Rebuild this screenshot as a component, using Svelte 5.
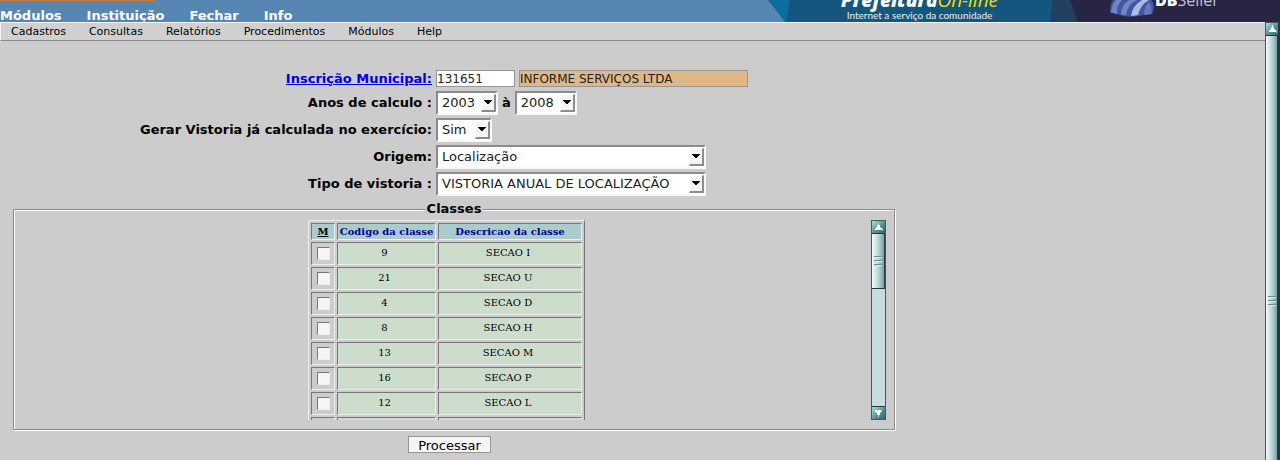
<script>
  const modules = ['Módulos', 'Instituição', 'Fechar', 'Info'];
  const menu = ['Cadastros', 'Consultas', 'Relatórios', 'Procedimentos', 'Módulos', 'Help'];
  const years = ['2003', '2004', '2005', '2006', '2007', '2008'];

  let inscription = $state('131651');
  let company = $state('INFORME SERVIÇOS LTDA');
  let from = $state('2003');
  let to = $state('2008');

  let classes = $state([
    { code: 9, name: 'SECAO I', on: false },
    { code: 21, name: 'SECAO U', on: false },
    { code: 4, name: 'SECAO D', on: false },
    { code: 8, name: 'SECAO H', on: false },
    { code: 13, name: 'SECAO M', on: false },
    { code: 16, name: 'SECAO P', on: false },
    { code: 12, name: 'SECAO L', on: false },
    { code: 3, name: 'SECAO C', on: false }
  ]);

  function toggleAll() {
    const next = !classes.every((c) => c.on);
    classes.forEach((c) => (c.on = next));
  }
</script>

{#snippet chevron()}
  <span class="drop"><svg viewBox="0 0 8 5" width="8" height="5" shape-rendering="crispEdges"><path d="M0 0h8v1H7v1H6v1H5v1H3V3H2V2H1V1H0z" /></svg></span>
{/snippet}

{#snippet arrow(down)}
  <svg class:down viewBox="0 0 13 12" width="13" height="12" aria-hidden="true" shape-rendering="crispEdges">
    <path d="M4 10h7V7h-1v3" fill="#8fc0c2" />
    <path d="M6 2h1v2h1v2h1v1h1v2H3V7h1V6h1V4h1z" fill="#fff" />
  </svg>
{/snippet}

{#snippet grip()}
  <svg viewBox="0 0 8 10" width="8" height="10" aria-hidden="true" shape-rendering="crispEdges">
    <path d="M0 0h8v1H0zM0 4h8v1H0zM0 8h8v1H0z" fill="#5f9192" />
    <path d="M0 1h8v1H0zM0 5h8v1H0zM0 9h8v1H0z" fill="#dcebeb" />
  </svg>
{/snippet}

<div class="page">
  <header>
    <nav class="modules">
      {#each modules as item}<a href="#{item}">{item}</a>{/each}
    </nav>
    <div class="banner">
      <svg class="art" viewBox="0 0 512 22" width="512" height="22" aria-hidden="true">
        <path d="M0 0h512v22H17z" fill="#0c6e9f" />
        <path d="M22 0h490v22H18z" fill="#15567f" />
        <path d="M284 0h228v22H282z" fill="#21405f" />
        <path d="M302 0h210v22H310z" fill="#272543" />
        <path d="M345 0h39q4 8 0 14-4 1-8 1-12 3-20 1-7-2-14-3 0-8 3-13z" fill="#4355a0" />
        <path d="M348 0h6q-6 6-5 14l-6-2q1-8 5-12zM361 0h8q-10 5-11 15h-5q0-10 8-15z" fill="#6e87c4" />
        <path d="M374 0h7q-9 5-11 15l-7 1q1-10 11-16z" fill="#adb9e6" />
        <path d="M381 2q4 6 2 12l-7 1q0-8 5-13z" fill="#6579bf" />
      </svg>
      <div class="brand">
        <div class="name"><b>Prefeitura</b><span>On-line</span></div>
        <div class="tag">Internet a serviço da comunidade</div>
      </div>
      <div class="seller"><b>DB</b>Seller</div>
    </div>
  </header>

  <div class="body">
    <main>
      <nav class="menu">
        {#each menu as item}<a href="#{item}">{item}</a>{/each}
      </nav>

      <form onsubmit={(e) => e.preventDefault()}>
        <div class="fields">
          <label for="insc"><a href="#busca">Inscrição Municipal:</a></label>
          <div class="row first">
            <input id="insc" class="code" bind:value={inscription} />
            <input class="company" aria-label="Nome" readonly bind:value={company} />
          </div>

          <label for="from">Anos de calculo :</label>
          <div class="row">
            <span class="pick"><select id="from" bind:value={from}>{#each years as y}<option>{y}</option>{/each}</select>{@render chevron()}</span>
            <label for="to">à</label>
            <span class="pick"><select id="to" bind:value={to}>{#each years as y}<option>{y}</option>{/each}</select>{@render chevron()}</span>
          </div>

          <label for="redo">Gerar Vistoria já calculada no exercício:</label>
          <div class="row">
            <span class="pick short"><select id="redo"><option>Sim</option><option>Não</option></select>{@render chevron()}</span>
          </div>

          <label for="origin">Origem:</label>
          <div class="row">
            <span class="pick wide"><select id="origin"><option>Localização</option></select>{@render chevron()}</span>
          </div>

          <label for="type">Tipo de vistoria :</label>
          <div class="row">
            <span class="pick wide"><select id="type"><option>VISTORIA ANUAL DE LOCALIZAÇÃO</option></select>{@render chevron()}</span>
          </div>
        </div>

        <fieldset>
          <legend>Classes</legend>
          <div class="list">
            <div class="view">
              <table>
                <thead>
                  <tr>
                    <th><button type="button" class="mark" onclick={toggleAll}>M</button></th>
                    <th>Codigo da classe</th>
                    <th>Descricao da classe</th>
                  </tr>
                </thead>
                <tbody>
                  {#each classes as c}
                    <tr>
                      <td><input type="checkbox" aria-label={c.name} bind:checked={c.on} /></td>
                      <td>{c.code}</td>
                      <td>{c.name}</td>
                    </tr>
                  {/each}
                </tbody>
              </table>
            </div>
            <div class="bar">
              <div class="cap">{@render arrow(false)}</div>
              <div class="thumb small">{@render grip()}</div>
              <div class="track"></div>
              <div class="cap">{@render arrow(true)}</div>
            </div>
          </div>
        </fieldset>

        <div class="actions"><button class="submit">Processar</button></div>
      </form>
    </main>
    <div class="bar outer">
      <div class="cap">{@render arrow(false)}</div>
      <div class="thumb tall">{@render grip()}</div>
    </div>
  </div>
</div>

<style>
  :global(body) { margin: 0; background: #ccc; }
  .page {
    display: flex;
    flex-direction: column;
    height: 100vh;
    overflow: hidden;
    font: 13px/16px "DejaVu Sans", sans-serif;
    color: #000;
  }
  a { color: inherit; text-decoration: none; }

  header {
    display: flex;
    justify-content: space-between;
    flex: none;
    height: 22px;
    overflow: hidden;
    background: #5886b2;
  }
  .modules {
    display: flex;
    align-items: flex-end;
    gap: 25px;
    height: 22px;
    font-weight: bold;
    line-height: 12px;
    color: #fff;
    position: relative;
  }
  .modules::before {
    content: "";
    position: absolute;
    top: 0;
    left: 0;
    width: 155px;
    height: 1px;
    background: repeating-linear-gradient(90deg, #c87a35 0 1px, #a08068 1px 2px);
  }
  .banner { position: relative; width: 512px; flex: none; }
  .art { display: block; }
  .brand, .seller { position: absolute; color: #fff; white-space: nowrap; }
  .brand { left: 73px; bottom: 1px; text-align: center; }
  .name { font: italic 19px/18px "Open Sans", sans-serif; }
  .name b { font-weight: 800; }
  .name span { color: #f2df00; }
  .tag { font: 10px/12px Lato, sans-serif; color: #e6eff5; }
  .seller { left: 387px; bottom: 14px; font: 16px/16px "Open Sans", sans-serif; color: #c4c3d0; }
  .seller b { color: #fff; font-weight: 800; }

  .body { display: flex; flex: 1; min-height: 0; }
  main { flex: 1; min-width: 0; overflow: hidden; }
  .menu {
    display: flex;
    gap: 23px;
    padding: 1px 10px 0;
    border: 1px solid #f4f4f4;
    border-right: 0;
    border-bottom-color: #8c8c8c;
    background: #d0d0d0;
    font-size: 11px;
    line-height: 16px;
  }

  form { max-width: 882px; padding: 28px 13px 0; }
  .fields {
    display: grid;
    grid-template-columns: 419px 1fr;
    column-gap: 4px;
    row-gap: 3px;
    align-items: center;
    font-weight: bold;
  }
  .fields > label { text-align: right; white-space: nowrap; }
  .fields > label a { color: #0000e6; text-decoration: underline; }
  .row { display: flex; align-items: center; gap: 4px; height: 24px; }
  .row.first { align-items: flex-start; height: 18px; padding-top: 1px; box-sizing: content-box; }
  .row input {
    box-sizing: border-box;
    height: 17px;
    margin: 0;
    padding: 1px 0 0;
    border: 1px solid #969696;
    border-radius: 0;
    font: 12px/15px "DejaVu Sans", sans-serif;
    color: #222;
    background: #fff;
  }
  .row .code { width: 79px; }
  .row .company { width: 229px; background: #deb887; }
  .pick {
    position: relative;
    box-sizing: border-box;
    display: block;
    width: 62px;
    height: 24px;
    border: 2px solid #8c8c8c;
    border-right-color: #f8f8f8;
    border-bottom-color: #f8f8f8;
    background: #fff;
  }
  .short { width: 56px; }
  .wide { width: 270px; }
  select {
    appearance: none;
    display: block;
    width: 100%;
    height: 20px;
    margin: 0;
    padding: 0 0 0 4px;
    border: 0;
    border-radius: 0;
    background: transparent;
    font: 13px/20px "DejaVu Sans", sans-serif;
    color: #222;
  }
  .drop {
    position: absolute;
    top: 1px;
    right: 0;
    box-sizing: border-box;
    display: grid;
    place-items: center;
    width: 15px;
    height: 18px;
    border: 1px solid #fff;
    border-right: 2px solid #8c8c8c;
    border-bottom: 2px solid #8c8c8c;
    background: #f5f5f3;
    pointer-events: none;
  }

  fieldset {
    min-width: 0;
    margin: 5px 0 0;
    padding: 3px 8px 9px;
    border: 1px solid #8c8c8c;
    box-shadow: inset 1px 1px #fff, 1px 1px #fff;
  }
  legend {
    margin: 0 auto;
    padding: 0 2px;
    font-weight: bold;
    background: #ccc;
  }
  .list { display: flex; height: 200px; }
  .view { flex: 1; overflow: hidden; }

  table {
    margin: 0 auto;
    border: 1px solid #eee;
    border-right-color: #777;
    border-bottom-color: #777;
    border-spacing: 2px;
    font: 10px/15px "DejaVu Serif", serif;
    text-align: center;
  }
  th, td {
    box-sizing: border-box;
    padding: 0;
    border: 1px solid #777;
    border-right-color: #eee;
    border-bottom-color: #eee;
    white-space: nowrap;
  }
  th { height: 17px; background: #aacccc; color: #00008b; }
  td { height: 23px; padding: 0 4px 2px 0; background: #ccddcc; }
  td:first-child { background: #ccc; padding: 0; }
  th:nth-child(1) { min-width: 24px; }
  th:nth-child(2) { min-width: 99px; }
  th:nth-child(3) { min-width: 144px; }
  .mark {
    display: block;
    margin: 0 auto;
    padding: 0;
    border: 0;
    background: none;
    font: inherit;
    color: #000;
    text-decoration: underline;
  }
  td input {
    appearance: none;
    display: block;
    box-sizing: border-box;
    width: 13px;
    height: 13px;
    margin: 0 auto;
    border: 1px solid #777;
    border-right-color: #eee;
    border-bottom-color: #eee;
    background: #f5f5f3;
  }
  td input:checked { background: #345; }

  .bar {
    display: flex;
    flex-direction: column;
    box-sizing: border-box;
    flex: none;
    width: 15px;
    overflow: hidden;
    border: 1px solid #4c5659;
    background: #c9dcdc;
  }
  .outer { border-right: 2px solid #26363c; border-bottom: 0; }
  .cap {
    flex: none;
    height: 12px;
    background: linear-gradient(135deg, #a5e0e3, #4f8c90 60%, #35686c);
  }
  .cap svg { display: block; }
  .down { transform: rotate(180deg); }
  .thumb {
    display: grid;
    place-items: center;
    flex: none;
    border: 1px solid #26383b;
    border-width: 1px 1px 0 0;
    background: linear-gradient(90deg, #f4fafa, #c0d8da 50%, #72a2a8);
  }
  .small { height: 54px; border-bottom-width: 1px; }
  .tall { height: 115vh; }
  .track { flex: 1; border-bottom: 1px solid #26383b; }

  .actions { display: flex; justify-content: center; padding: 6px 9px 0 0; }
  .submit {
    height: 17px;
    padding: 1px 9px 0;
    border: 1px solid #969696;
    border-radius: 0;
    background: #f5f5f3;
    font: 13px/15px "DejaVu Sans", sans-serif;
    color: #000;
  }
</style>
